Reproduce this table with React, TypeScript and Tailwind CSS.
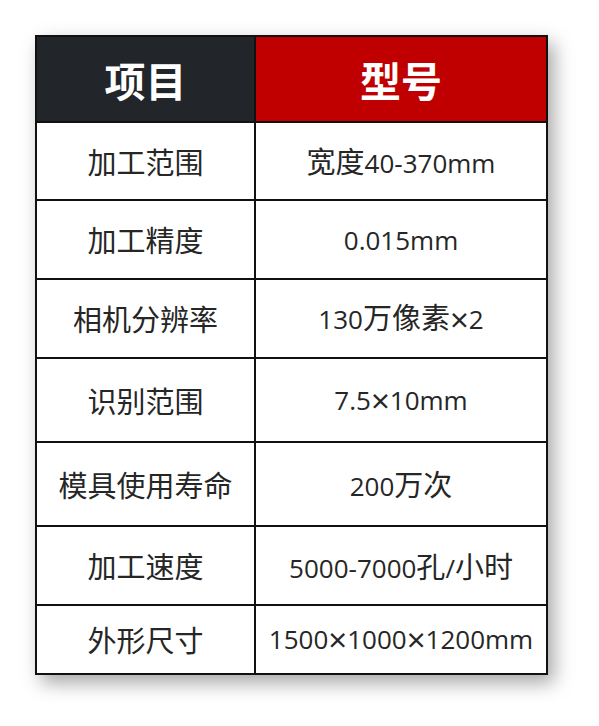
import React from 'react';

const rows: { label: string; value: string; h: string }[] = [
  { label: '加工范围', value: '宽度40-370mm', h: 'h-[78px]' },
  { label: '加工精度', value: '0.015mm', h: 'h-[79px]' },
  { label: '相机分辨率', value: '130万像素×2', h: 'h-[79px]' },
  { label: '识别范围', value: '7.5×10mm', h: 'h-[84px]' },
  { label: '模具使用寿命', value: '200万次', h: 'h-[84px]' },
  { label: '加工速度', value: '5000-7000孔/小时', h: 'h-[79px]' },
  { label: '外形尺寸', value: '1500×1000×1200mm', h: 'h-[67px]' },
];

// CJK glyphs and the × sign run larger than the Latin ones in the source document
const Mixed = ({ text }: { text: string }) => {
  const parts = text.split(/([\u4e00-\u9fff]+|×)/).filter(Boolean);
  return (
    <span className="whitespace-nowrap">
      {parts.map((p, i) => {
        if (p === '×')
          return (
            <span key={i} className="align-[-3px] text-[33px] font-['Open_Sans',sans-serif]">
              ×
            </span>
          );
        if (/[\u4e00-\u9fff]/.test(p))
          return (
            <span key={i} className="text-[29px] font-['Noto_Sans_CJK_SC',sans-serif]">
              {p}
            </span>
          );
        return (
          <span key={i} className="text-[26px] font-['Open_Sans','Noto_Sans_CJK_SC',sans-serif]">
            {p}
          </span>
        );
      })}
    </span>
  );
};

export default function App() {
  return (
    <div className="min-h-[726px] w-[599px] bg-white pl-[35px] pt-[35px]">
      <div className="w-[513px] border-2 border-[#111] bg-white shadow-[6px_8px_18px_rgba(0,0,0,0.35)]">
        {/* Header */}
        <div className="flex h-[86px] border-b-2 border-[#111]">
          <div className="flex w-[219px] items-center justify-center border-r-2 border-[#111] bg-[#22252a]">
            <span className="text-[41px] font-bold leading-none text-white font-['Noto_Sans_CJK_SC',sans-serif]">
              项目
            </span>
          </div>
          <div className="flex flex-1 items-center justify-center bg-[#c00000]">
            <span className="text-[41px] font-bold leading-none text-white font-['Noto_Sans_CJK_SC',sans-serif]">
              型号
            </span>
          </div>
        </div>

        {/* Rows */}
        {rows.map((r, i) => (
          <div
            key={r.label}
            className={`flex ${r.h} ${i < rows.length - 1 ? 'border-b-2 border-[#111]' : ''}`}
          >
            <div className="flex w-[219px] items-center justify-center border-r-2 border-[#111] leading-none text-[#262626]">
              <Mixed text={r.label} />
            </div>
            <div className="flex flex-1 items-center justify-center leading-none text-[#262626]">
              <Mixed text={r.value} />
            </div>
          </div>
        ))}
      </div>
    </div>
  );
}
